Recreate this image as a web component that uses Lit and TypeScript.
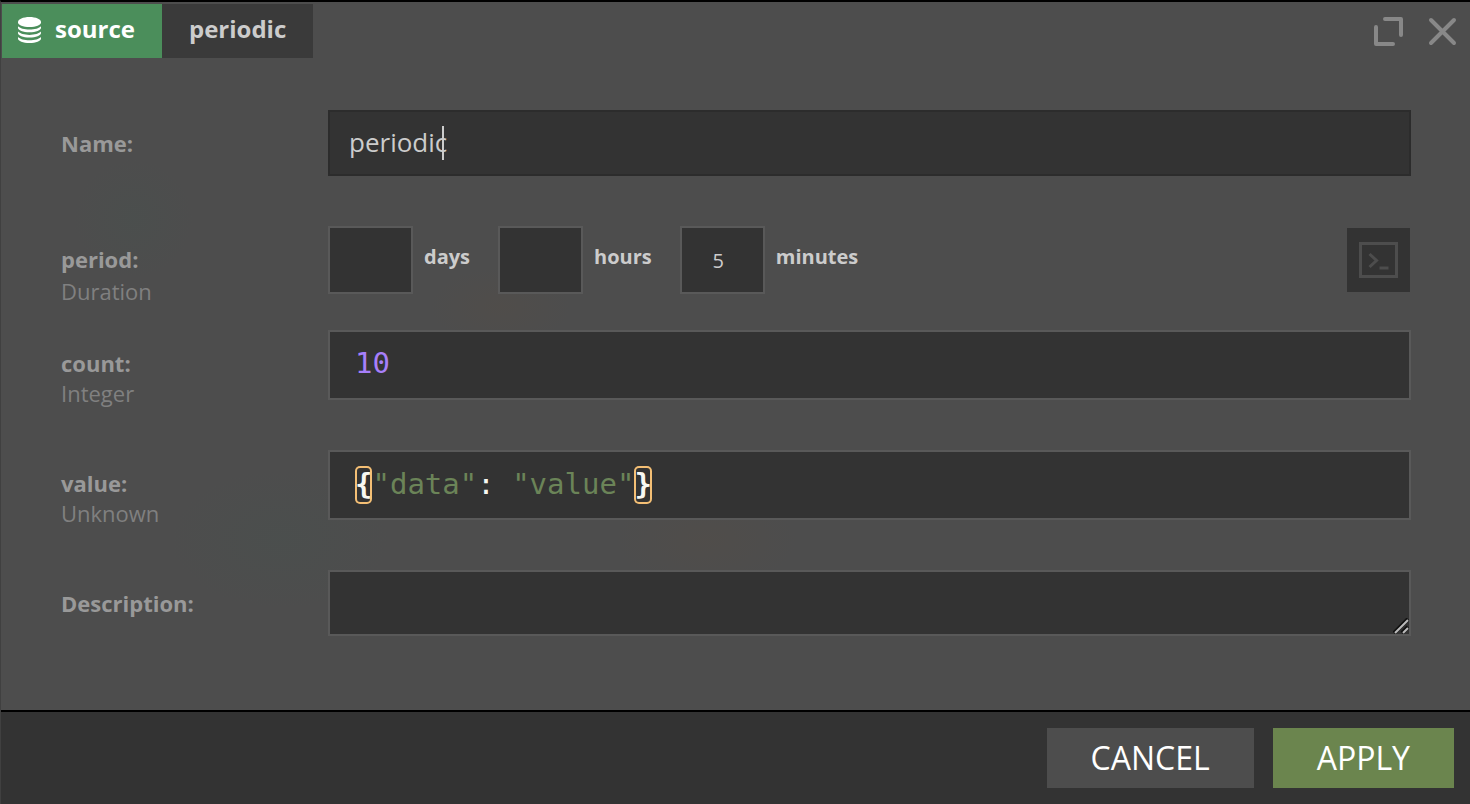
import { LitElement, html, css, svg, nothing } from "lit";
import { customElement, property } from "lit/decorators.js";

const databaseIcon = svg`
  <path d="M0 5C0 2.200 5.100 0 11.500 0S23 2.200 23 5v.6c0 2.500-5.100 4.500-11.500 4.500S0 8.100 0 5.600z"/>
  <path d="M0 9.300c2 2 6.400 3.300 11.500 3.300S21 11.300 23 9.300v1.500c0 2.500-5.100 4.500-11.500 4.500S0 13.300 0 10.800z"/>
  <path d="M0 14.600c2 2 6.400 3.300 11.500 3.300S21 16.600 23 14.600v1.500c0 2.500-5.100 4.500-11.500 4.500S0 18.600 0 16.100z"/>
  <path d="M0 19.900c2 2 6.400 3.300 11.500 3.300S21 21.900 23 19.900v1.500c0 2.500-5.100 4.500-11.500 4.500S0 23.900 0 21.400z"/>`;

@customElement("form-row")
class FormRow extends LitElement {
  @property() kind = "";

  static styles = css`
    :host {
      display: grid;
      grid-template-columns: 267px minmax(0, 1fr);
      align-items: start;
      min-height: 120px;
    }
    :host([size="name"]) {
      min-height: 116px;
    }
    :host([size="compact"]) {
      min-height: 104px;
    }
    :host([size="last"]) {
      min-height: 66px;
    }
    .label {
      padding-top: 18px;
      font-size: 22px;
      line-height: 30px;
      color: #999;
    }
    .kind {
      color: #808080;
    }
    :host([size="compact"]) .kind {
      line-height: 34px;
    }
    .field {
      position: relative;
    }
  `;

  render() {
    return html`
      <div class="label">
        <slot name="label"></slot>
        ${this.kind ? html`<div class="kind">${this.kind}</div>` : nothing}
      </div>
      <div class="field"><slot></slot></div>
    `;
  }
}

@customElement("app-root")
class AppRoot extends LitElement {
  static styles = css`
    * {
      box-sizing: border-box;
    }
    :host {
      display: flex;
      flex-direction: column;
      box-sizing: border-box;
      min-height: 100vh;
      border-top: 2px solid #000;
      border-left: 1px solid #404040;
      background:
        radial-gradient(ellipse 60px 60px at 9% 27%, rgba(70, 82, 78, 0.3), transparent),
        radial-gradient(ellipse 110px 70px at 19% 67%, rgba(70, 82, 78, 0.3), transparent),
        radial-gradient(ellipse 70px 40px at 34% 38%, rgba(84, 77, 70, 0.4), transparent),
        radial-gradient(ellipse 90px 50px at 48% 67%, rgba(84, 77, 70, 0.4), transparent),
        #4d4d4d;
      color: #ccc;
      font-family: "Open Sans", "Noto Sans", sans-serif;
    }
    button,
    input,
    textarea {
      margin: 0;
      border-radius: 0;
      font-family: inherit;
      color: inherit;
      outline: none;
    }
    button {
      border: 0;
      cursor: pointer;
    }
    svg {
      display: block;
    }
    .header {
      display: flex;
      align-items: flex-start;
    }
    .tabs {
      display: flex;
      padding: 2px 0 0 1px;
      flex: 1;
      font-size: 24px;
      font-weight: 700;
      line-height: 34px;
    }
    .tab {
      display: flex;
      height: 54px;
      padding: 8px 27px;
      background: #3a3a3a;
    }
    .tab.source {
      gap: 14px;
      padding-left: 16px;
      background: #4b8e5b;
      color: #fff;
    }
    .tab svg {
      margin-top: 5px;
    }
    .tools {
      display: flex;
      gap: 22px;
      padding: 13px 13px 0 0;
      color: #888;
    }
    .tools button {
      padding: 0;
      background: none;
    }
    .form {
      flex: 1;
      padding: 52px 59px 24px 60px;
    }
    .label {
      font-weight: 700;
    }
    .box {
      display: block;
      width: 100%;
      height: 66px;
      border: 2px solid #595959;
      background: #333;
    }
    .name {
      padding: 0 19px 2px;
      border-color: #2c2c2c;
      font-size: 26px;
    }
    .caret {
      position: absolute;
      left: 114px;
      top: 16px;
      width: 2px;
      height: 34px;
      background: #ccc;
    }
    .duration {
      display: flex;
      align-items: center;
    }
    .unit {
      display: flex;
      align-items: center;
      margin-right: 28px;
      gap: 11px;
      font-size: 20px;
      font-weight: 700;
      line-height: 30px;
    }
    .unit span {
      padding-bottom: 6px;
    }
    .number {
      width: 85px;
      height: 68px;
      padding: 0 8px 0 0;
      font-size: 20px;
      text-align: center;
    }
    .terminal {
      margin-left: auto;
      margin-right: 1px;
      width: 63px;
      height: 64px;
      padding: 0 0 0 12px;
      background: #333;
      color: #4d4d4d;
    }
    .code {
      height: 70px;
      padding: 0 25px;
      font-family: "DejaVu Sans Mono", monospace;
      font-size: 29px;
      line-height: 64px;
      white-space: pre;
      color: #f8f8f2;
    }
    .integer {
      padding-bottom: 4px;
      color: #a77ffa;
    }
    .string {
      color: #6b8458;
    }
    .bracket {
      padding: 1px 0 3px;
      border-radius: 5px;
      box-shadow: 0 0 0 2px #f4bf75 inset;
      font-weight: 700;
    }
    .description {
      padding: 14px 18px;
      font-size: 26px;
      resize: none;
    }
    .grip {
      position: absolute;
      right: 2px;
      bottom: 2px;
      pointer-events: none;
    }
    .footer {
      display: flex;
      justify-content: flex-end;
      gap: 19px;
      padding: 16px;
      border-top: 2px solid #000;
      background: #333;
    }
    .action {
      height: 60px;
      padding: 0 44px;
      background: #4d4d4d;
      color: #fff;
      font-size: 32px;
      line-height: 60px;
    }
    .apply {
      background: #6b854e;
    }
  `;

  private unit(name: string, value: string) {
    return html`<label class="unit">
      <input class="box number" type="text" inputmode="numeric" .value=${value} />
      <span>${name}</span>
    </label>`;
  }

  render() {
    return html`
      <header class="header">
        <div class="tabs">
          <div class="tab source">
            <svg width="23" height="27" viewBox="0 0 23 27" fill="currentColor" aria-hidden="true">${databaseIcon}</svg>
            <span>source</span>
          </div>
          <div class="tab">periodic</div>
        </div>
        <div class="tools">
          <button aria-label="Maximize">
            <svg width="32" height="32" viewBox="0 0 32 32" fill="none" stroke="currentColor" stroke-width="4" stroke-linecap="round" stroke-linejoin="round">
              <path d="M12 4h16v16M3 12v17h17" />
            </svg>
          </button>
          <button aria-label="Close">
            <svg width="30" height="32" viewBox="0 0 30 32" fill="none" stroke="currentColor" stroke-width="4" stroke-linecap="round">
              <path d="M4 5l23 23M27 5L4 28" />
            </svg>
          </button>
        </div>
      </header>

      <main class="form">
        <form-row size="name">
          <label class="label" slot="label" for="name">Name:</label>
          <input class="box name" id="name" type="text" value="periodic" />
          <span class="caret"></span>
        </form-row>
        <form-row kind="Duration" size="compact">
          <span class="label" slot="label">period:</span>
          <div class="duration">
            ${this.unit("days", "")} ${this.unit("hours", "")} ${this.unit("minutes", "5")}
            <button class="terminal" aria-label="Edit as expression">
              <svg width="40" height="36" viewBox="0 0 40 36" fill="none" stroke="currentColor" stroke-width="3">
                <path d="M1.500 1.500h36v33h-36zM10.500 12l7 6.500-7 6.500M20.500 26h9" />
              </svg>
            </button>
          </div>
        </form-row>
        <form-row kind="Integer">
          <label class="label" slot="label" for="count">count:</label>
          <input class="box code integer" id="count" type="text" value="10" />
        </form-row>
        <form-row kind="Unknown">
          <span class="label" slot="label" id="value-label">value:</span>
          <div class="box code" role="textbox" contenteditable="true" spellcheck="false" aria-labelledby="value-label"><span class="bracket">{</span><span class="string">"data"</span>: <span class="string">"value"</span><span class="bracket">}</span></div>
        </form-row>
        <form-row size="last">
          <label class="label" slot="label" for="description">Description:</label>
          <textarea class="box description" id="description"></textarea>
          <svg class="grip" width="16" height="16" viewBox="0 0 16 16" fill="none">
            <path d="M1 15L15 1M9 15l6-6" stroke="#111" stroke-width="4" />
            <path d="M2 15L15 2M10 15l5-5" stroke="#bbb" stroke-width="2" />
          </svg>
        </form-row>
      </main>

      <footer class="footer">
        <button class="action">CANCEL</button>
        <button class="action apply">APPLY</button>
      </footer>
    `;
  }
}
